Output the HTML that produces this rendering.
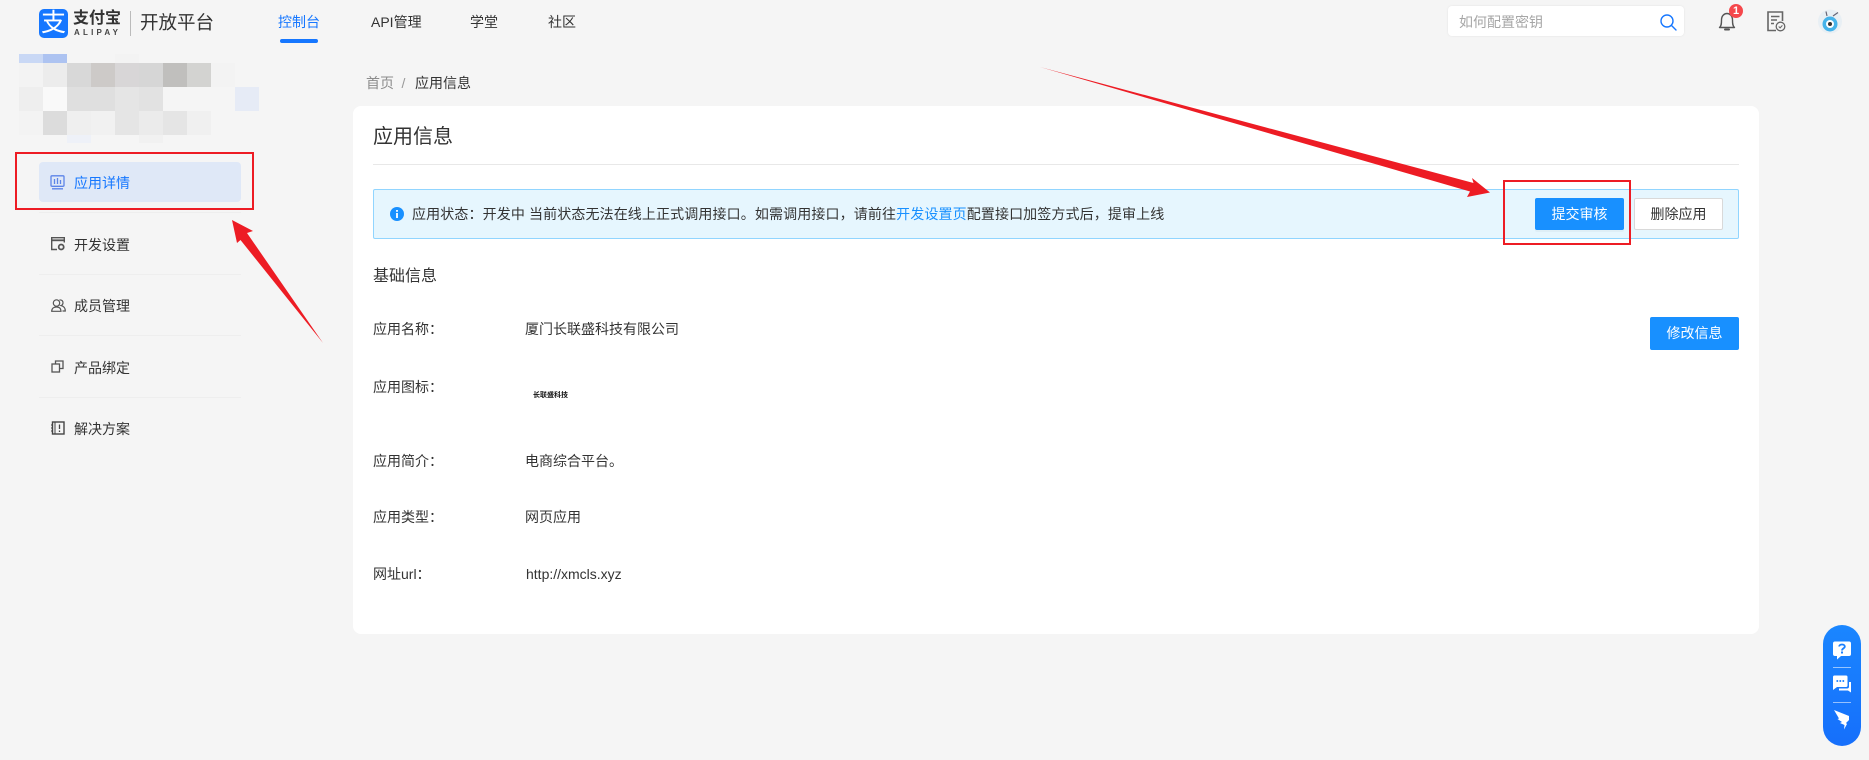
<!DOCTYPE html>
<html lang="zh-CN"><head><meta charset="utf-8"><title>应用信息</title>
<style>
html,body{margin:0;padding:0;width:1869px;height:760px;overflow:hidden;background:#f5f5f5}
body{position:relative;font-family:"Liberation Sans","Noto Sans CJK SC",sans-serif;font-size:14px;color:#333}
.a{position:absolute}
.t{position:absolute;white-space:nowrap;height:20px;line-height:20px}
.p{position:absolute;height:24px;width:24px}
.d{position:absolute;left:39px;width:202px;height:1px;background:#eeeeee}
.btn{position:absolute;box-sizing:border-box;text-align:center;border-radius:2px;font-size:14px}
.pri{background:#1890ff;color:#fff}
svg{position:absolute;overflow:visible}
</style></head><body>

<!-- logo -->
<div class="a" style="left:39px;top:9px;width:29px;height:29px;background:#1677ff;border-radius:5px;color:#fff;font-size:25px;line-height:28px;text-align:center">支</div>
<div class="t" style="left:73px;top:9px;font-size:16px;font-weight:700;color:#333;height:20px">支付宝</div>
<div class="t" style="left:74px;top:27px;font-size:8px;height:11px;line-height:11px;letter-spacing:3.2px;color:#444;font-weight:700">ALIPAY</div>
<div class="a" style="left:130px;top:11px;width:1px;height:25px;background:#bbb"></div>
<div class="t" style="left:140px;top:13px;font-size:18.5px;color:#333">开放平台</div>

<!-- nav -->
<div class="t" style="left:278px;top:12px;color:#1677ff">控制台</div>
<div class="a" style="left:280px;top:39px;width:38px;height:4px;background:#1677ff;border-radius:2px"></div>
<div class="t" style="left:371px;top:12px">API管理</div>
<div class="t" style="left:470px;top:12px">学堂</div>
<div class="t" style="left:548px;top:12px">社区</div>

<!-- search -->
<div class="a" style="left:1448px;top:6px;width:236px;height:30px;background:#fff;border-radius:4px;box-shadow:0 0 2px rgba(0,0,0,.08)"></div>
<div class="t" style="left:1459px;top:12px;color:#a6a6a6">如何配置密钥</div>
<svg style="left:1660px;top:14px" width="17" height="17" viewBox="0 0 17 17" fill="none" stroke="#1677ff" stroke-width="1.4"><circle cx="7" cy="7" r="6"/><path d="M11.4 11.4 L16 16" stroke-linecap="round"/></svg>

<!-- bell -->
<svg style="left:1718px;top:11px" width="18" height="21" viewBox="0 0 18 21" fill="none" stroke="#555" stroke-width="1.4"><path d="M1.5 16.5 C3.5 15 3.5 12 3.5 9 C3.5 5 6 2.5 9 2.5 C12 2.5 14.5 5 14.5 9 C14.5 12 14.5 15 16.5 16.5 Z" stroke-linejoin="round"/><path d="M7 18.5 h4" stroke-width="2" stroke-linecap="round"/></svg>
<div class="a" style="left:1729px;top:4px;width:14px;height:14px;border-radius:50%;background:#f5474b;color:#fff;font-size:11px;line-height:14px;text-align:center;font-weight:700">1</div>
<!-- doc -->
<svg style="left:1767px;top:11px" width="19" height="21" viewBox="0 0 19 21" fill="none" stroke="#666" stroke-width="1.6"><path d="M9 19.5 H1 V1 H15.5 V10"/><path d="M4 5.5 h8.5 M4 9 h6 M4 12.5 h3" /><circle cx="13.5" cy="15.5" r="4.3" stroke-width="1.3"/><path d="M11.7 15.5 l1.4 1.4 l2.3-2.5" stroke-width="1"/></svg>
<!-- avatar -->
<svg style="left:1818px;top:9px" width="24" height="24" viewBox="0 0 24 24"><circle cx="12" cy="12.5" r="12" fill="#e8eff4"/><circle cx="12" cy="15" r="7.5" fill="#46b3ea"/><circle cx="12" cy="15" r="4" fill="#fff"/><circle cx="12" cy="15" r="2" fill="#333"/><path d="M9 7 L8 2.5 M15 7 L20 3.5" stroke="#667" stroke-width="1.2" fill="none"/></svg>

<!-- pixelated block -->
<div class="a" style="left:19px;top:54px;width:24px;height:9px;background:#c9d8f5"></div>
<div class="a" style="left:43px;top:54px;width:24px;height:9px;background:#adc3f1"></div>
<div class="a" style="left:115px;top:54px;width:24px;height:9px;background:#f3f3f3"></div>
<div class="p" style="left:19px;top:63px;background:#f3f3f3"></div>
<div class="p" style="left:43px;top:63px;background:#ececec"></div>
<div class="p" style="left:67px;top:63px;background:#d8d8d8"></div>
<div class="p" style="left:91px;top:63px;background:#cdcac8"></div>
<div class="p" style="left:115px;top:63px;background:#d8d6d7"></div>
<div class="p" style="left:139px;top:63px;background:#d6d6d6"></div>
<div class="p" style="left:163px;top:63px;background:#c0bfbd"></div>
<div class="p" style="left:187px;top:63px;background:#d3d3d1"></div>
<div class="p" style="left:211px;top:63px;background:#f3f3f3"></div>
<div class="p" style="left:19px;top:87px;background:#eeeeee"></div>
<div class="p" style="left:43px;top:87px;background:#f9f9f9"></div>
<div class="p" style="left:67px;top:87px;background:#dfdfdf"></div>
<div class="p" style="left:91px;top:87px;background:#dfdfdf"></div>
<div class="p" style="left:115px;top:87px;background:#e5e5e5"></div>
<div class="p" style="left:139px;top:87px;background:#e2e2e2"></div>
<div class="p" style="left:235px;top:87px;background:#e6ebf6"></div>
<div class="p" style="left:19px;top:111px;background:#f3f3f3"></div>
<div class="p" style="left:43px;top:111px;background:#dcdcdc"></div>
<div class="p" style="left:67px;top:111px;background:#efefef"></div>
<div class="p" style="left:91px;top:111px;background:#f1f1f1"></div>
<div class="p" style="left:115px;top:111px;background:#e5e5e5"></div>
<div class="p" style="left:139px;top:111px;background:#ebebeb"></div>
<div class="p" style="left:163px;top:111px;background:#e5e5e5"></div>
<div class="p" style="left:187px;top:111px;background:#f0f0f0"></div>
<div class="a" style="left:67px;top:135px;width:24px;height:8px;background:#eef1f8"></div>
<div class="a" style="left:139px;top:135px;width:24px;height:8px;background:#f1f1f1"></div>

<!-- sidebar -->
<div class="a" style="left:39px;top:162px;width:202px;height:40px;background:#dfe8f7;border-radius:4px"></div>
<svg style="left:50px;top:175px" width="15" height="15" viewBox="0 0 15 15" fill="none" stroke="#5c84e8" stroke-width="1.3"><rect x="1" y="0.8" width="13" height="10.5" rx="1"/><path d="M4.5 4 v5 M7.5 3 v6 M10.5 5 v4 M2 13.8 h11"/></svg>
<div class="t" style="left:74px;top:173px;color:#1677ff">应用详情</div>
<div class="d" style="top:212px"></div>
<svg style="left:51px;top:237px" width="14" height="14" viewBox="0 0 14 14" fill="none" stroke="#555" stroke-width="1.4"><path d="M6 12.5 H.7 V.7 H13.3 V5.5"/><path d="M.7 3.3 H13.3" stroke-width="1.8"/><circle cx="10.2" cy="10" r="2.5" stroke-width="1.8"/></svg>
<div class="t" style="left:74px;top:235px">开发设置</div>
<div class="d" style="top:274px"></div>
<svg style="left:51px;top:299px" width="15" height="13" viewBox="0 0 15 13" fill="none" stroke="#555" stroke-width="1.2"><circle cx="5.5" cy="4" r="3.2"/><path d="M.7 12.3 C.7 9.5 2.7 8 5.5 8 C8.5 8 10 9.5 10 12.3 Z"/><path d="M8.5 1 C10.8 .6 12.3 2.2 12 4.2 C11.8 5.6 11 6.2 10 6.6 C12.6 7.2 14.3 9.2 14.3 12 H11.5"/></svg>
<div class="t" style="left:74px;top:296px">成员管理</div>
<div class="d" style="top:335px"></div>
<svg style="left:51px;top:360px" width="13" height="13" viewBox="0 0 13 13" fill="none" stroke="#555" stroke-width="1.3"><path d="M4.5 4 V1 H12 V8.5 H8.5"/><rect x="1" y="4" width="7.5" height="8"/></svg>
<div class="t" style="left:74px;top:358px" >产品绑定</div>
<div class="d" style="top:397px"></div>
<svg style="left:51px;top:421px" width="14" height="14" viewBox="0 0 14 14" fill="none" stroke="#444" stroke-width="1.4"><rect x="1.5" y="1" width="11.5" height="12"/><path d="M4 1 V13" stroke-width="1"/><path d="M8.5 3.5 V8 M8.5 9.5 V11" stroke-width="1.3"/><path d="M0 4 h2 M0 7 h2 M0 10 h2" stroke-width="1"/></svg>
<div class="t" style="left:74px;top:419px">解决方案</div>

<!-- breadcrumb -->
<div class="t" style="left:366px;top:73px;color:#8c8c8c">首页</div>
<div class="t" style="left:401.5px;top:73px;color:#999">/</div>
<div class="t" style="left:415px;top:73px">应用信息</div>

<!-- card -->
<div class="a" style="left:353px;top:106px;width:1406px;height:528px;background:#fff;border-radius:8px"></div>
<div class="t" style="left:373px;top:122px;font-size:20px;height:30px;line-height:30px">应用信息</div>
<div class="a" style="left:373px;top:164px;width:1366px;height:1px;background:#e8e8e8"></div>

<!-- alert -->
<div class="a" style="left:373px;top:189px;width:1366px;height:50px;box-sizing:border-box;background:#e6f6fe;border:1px solid #91d5ff;border-radius:2px"></div>
<svg style="left:390px;top:207px" width="14" height="14" viewBox="0 0 14 14"><circle cx="7" cy="7" r="7" fill="#1890ff"/><rect x="6.1" y="6" width="1.8" height="5" fill="#fff"/><rect x="6.1" y="3" width="1.8" height="1.8" fill="#fff"/></svg>
<div class="t" style="left:412px;top:204px;letter-spacing:.12px">应用状态：开发中 当前状态无法在线上正式调用接口。如需调用接口，请前往<span style="color:#1890ff">开发设置页</span>配置接口加签方式后，提审上线</div>
<div class="btn pri" style="left:1535px;top:198px;width:89px;height:32px;line-height:32px;box-shadow:0 2px 0 rgba(0,0,0,.03)">提交审核</div>
<div class="btn" style="left:1634px;top:198px;width:89px;height:32px;line-height:30px;background:#fff;border:1px solid #d9d9d9">删除应用</div>

<!-- basic info -->
<div class="t" style="left:373px;top:267px;font-size:16px">基础信息</div>
<div class="t" style="left:373px;top:319px">应用名称：</div>
<div class="t" style="left:525px;top:319px">厦门长联盛科技有限公司</div>
<div class="btn pri" style="left:1650px;top:317px;width:89px;height:33px;line-height:33px">修改信息</div>
<div class="t" style="left:373px;top:377px">应用图标：</div>
<div class="t" style="left:533px;top:391px;font-size:7px;height:10px;line-height:10px;font-weight:700;color:#111">长联盛科技</div>
<div class="t" style="left:373px;top:451px">应用简介：</div>
<div class="t" style="left:525px;top:451px">电商综合平台。</div>
<div class="t" style="left:373px;top:507px">应用类型：</div>
<div class="t" style="left:525px;top:507px">网页应用</div>
<div class="t" style="left:373px;top:564px">网址url：</div>
<div class="t" style="left:526px;top:564px">http://xmcls.xyz</div>

<!-- floating bar -->
<div class="a" style="left:1823px;top:625px;width:38px;height:121px;border-radius:19px;background:linear-gradient(180deg,#1a86ff,#166ffb)"></div>
<div class="a" style="left:1833px;top:667px;width:18px;height:1px;background:rgba(255,255,255,.55)"></div>
<div class="a" style="left:1833px;top:702px;width:18px;height:1px;background:rgba(255,255,255,.55)"></div>
<svg style="left:1833px;top:641px" width="18" height="19" viewBox="0 0 18 19"><path d="M2 0.5 H16 Q18 0.5 18 2.5 V13 Q18 15 16 15 H8 L4 18.5 V15 H2 Q0 15 0 13 V2.5 Q0 .5 2 .5Z" fill="#fff"/><path d="M6.2 5.5 C6.2 2.8 11.8 2.8 11.8 5.5 C11.8 7.5 9 7.3 9 9.5" fill="none" stroke="#1a80ff" stroke-width="1.8"/><rect x="8" y="10.5" width="2" height="2" fill="#1a80ff"/></svg>
<svg style="left:1833px;top:675px" width="18" height="18" viewBox="0 0 18 18"><path d="M1.5 0.5 H13 Q14.5 .5 14.5 2 V10.5 Q14.5 12 13 12 H4 L0 15 V2 Q0 .5 1.5 .5Z" fill="#fff"/><circle cx="4.3" cy="6" r="1" fill="#1a80ff"/><circle cx="7.3" cy="6" r="1" fill="#1a80ff"/><circle cx="10.3" cy="6" r="1" fill="#1a80ff"/><path d="M16 7 H18 V17.5 L15 15.5 H6 V13.5 H14 Q16 13.5 16 11.5Z" fill="#fff"/></svg>
<svg style="left:1834px;top:710px" width="16" height="20" viewBox="0 0 16 20"><path d="M0 0 L15 6 L15 10 L12 13 L13 14 L10 19.5 L10.5 15 L6 13 L8 12 L3.5 9 L5 8.5 Z" fill="#fff"/></svg>

<!-- red annotations -->
<div class="a" style="left:15px;top:152px;width:239px;height:58px;box-sizing:border-box;border:2px solid #ed1c24"></div>
<div class="a" style="left:1503px;top:180px;width:128px;height:65px;box-sizing:border-box;border:2px solid #ed1c24"></div>
<svg style="left:0;top:0" width="1869" height="760"><polygon points="232,220 253,231 247,233 323,343 240.5,240 237,243" fill="#ed1c24"/><polygon points="1040,67 1473.5,183 1472,178 1490,192.500 1467,197 1470,191.500" fill="#ed1c24"/></svg>

</body></html>
